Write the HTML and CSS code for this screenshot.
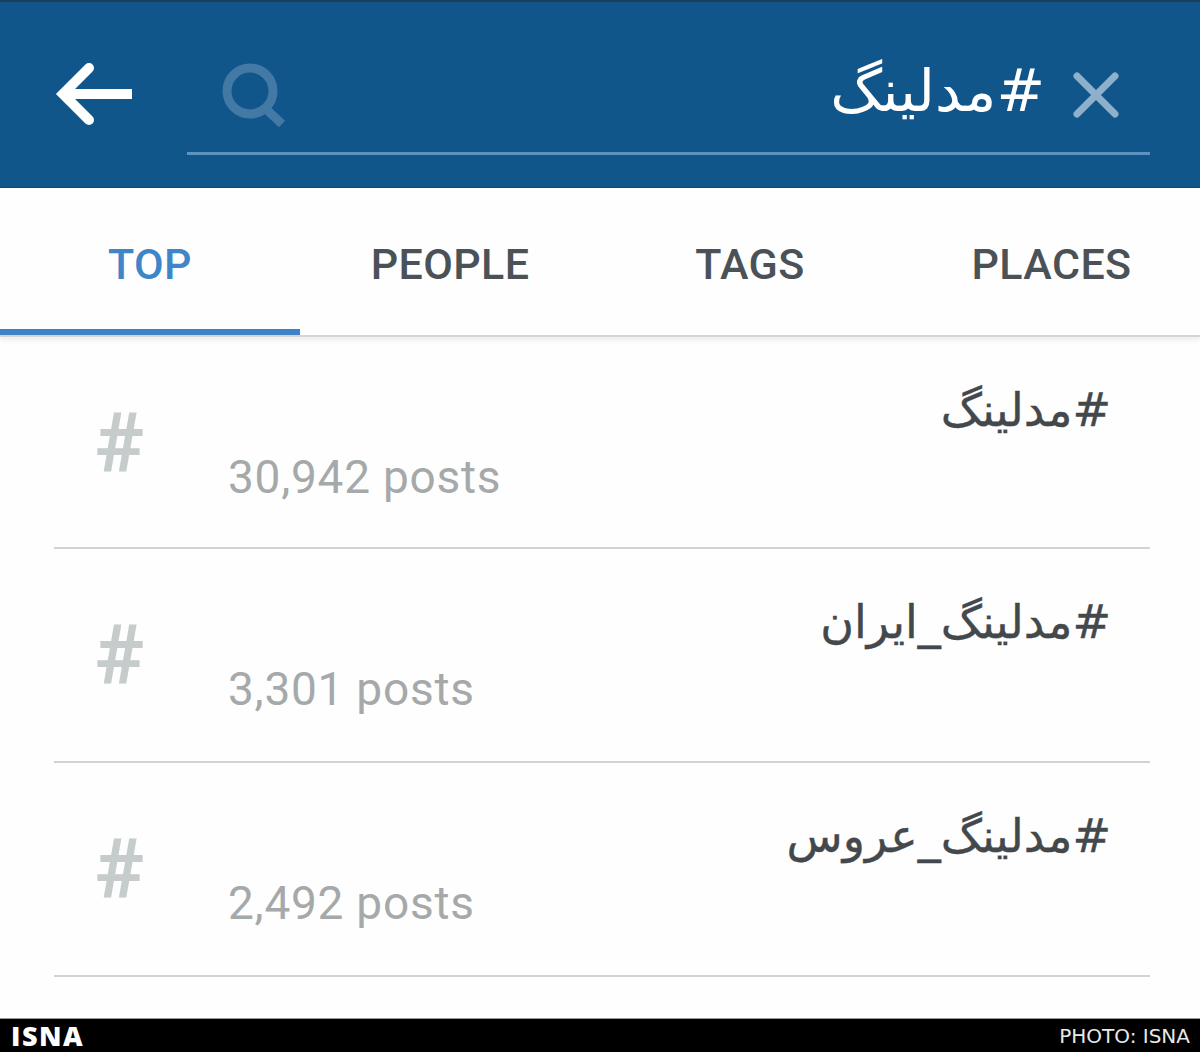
FILE: index.html
```html
<!DOCTYPE html>
<html lang="en">
<head>
    <meta charset="UTF-8">
    <meta name="viewport" content="width=device-width, initial-scale=1.0">
    <title>Search</title>
    <link rel="stylesheet" href="styles.css">
</head>
<body>
    <header class="search-bar">
        <svg class="back-icon" width="80" height="66" viewBox="0 0 80 66">
            <path d="M37 7 L11 33 L37 59" fill="none" stroke="#fff" stroke-width="10" stroke-linecap="round"/>
            <path d="M11 33 H80" fill="none" stroke="#fff" stroke-width="10"/>
        </svg>
        <div class="search-field">
            <svg class="search-icon" width="66" height="66" viewBox="0 0 66 66">
                <circle cx="28" cy="28" r="23" fill="none" stroke="#4279a5" stroke-width="9"/>
                <path d="M45 47 L60 61" fill="none" stroke="#4279a5" stroke-width="9"/>
            </svg>
            <span class="search-text" dir="rtl">#مدلینگ</span>
            <svg class="clear-icon" width="48" height="48" viewBox="0 0 48 48">
                <path d="M5 5 L43 43 M43 5 L5 43" fill="none" stroke="#8fb0cb" stroke-width="7" stroke-linecap="round"/>
            </svg>
        </div>
    </header>

    <nav class="tabs">
        <div class="tab active">TOP</div>
        <div class="tab">PEOPLE</div>
        <div class="tab">TAGS</div>
        <div class="tab last">PLACES</div>
    </nav>

    <main class="results">
        <div class="result">
            <div class="hash">#</div>
            <div class="result-body">
                <div class="tag" dir="rtl">#مدلینگ</div>
                <div class="posts">30,942 posts</div>
            </div>
        </div>
        <div class="result">
            <div class="hash">#</div>
            <div class="result-body">
                <div class="tag" dir="rtl">#مدلینگ_ایران</div>
                <div class="posts">3,301 posts</div>
            </div>
        </div>
        <div class="result">
            <div class="hash">#</div>
            <div class="result-body">
                <div class="tag" dir="rtl">#مدلینگ_عروس</div>
                <div class="posts">2,492 posts</div>
            </div>
        </div>
    </main>

    <footer class="credit">
        <span class="credit-logo">ISNA</span>
        <span class="credit-photo">PHOTO: ISNA</span>
    </footer>
</body>
</html>
```

FILE: styles.css
```css
html, body {
    margin: 0;
    padding: 0;
}
body {
    width: 1200px;
    height: 1052px;
    overflow: hidden;
    background: #fefefe;
    font-family: Roboto, "Liberation Sans", sans-serif;
    display: flex;
    flex-direction: column;
}
.search-bar {
    height: 188px;
    box-sizing: border-box;
    background: #11568a;
    border-top: 2px solid #1e3d5c;
    border-bottom: 1px solid #0e4a78;
    display: flex;
    padding: 0 50px 0 52px;
}
.back-icon {
    margin-top: 59px;
    flex: none;
}
.search-field {
    flex: 1;
    margin-left: 55px;
    height: 153px;
    box-sizing: border-box;
    border-bottom: 3px solid #5c93c0;
    display: flex;
    align-items: flex-start;
    padding: 0 30px 0 35px;
}
.search-icon {
    margin-top: 61px;
    flex: none;
}
.search-text {
    flex: 1;
    margin-top: 54px;
    padding-right: 27px;
    text-align: right;
    color: #fff;
    font-family: "DejaVu Sans", sans-serif;
    font-size: 58px;
    line-height: 70px;
}
.clear-icon {
    margin-top: 69px;
    flex: none;
}
.tabs {
    display: grid;
    grid-template-columns: repeat(4, 300px);
    height: 149px;
    box-sizing: border-box;
    border-bottom: 2px solid #d4d6d6;
    box-shadow: 0 3px 6px rgba(0,0,0,0.08);
}
.tab {
    text-align: center;
    font-size: 43px;
    font-weight: 500;
    letter-spacing: 0.4px;
    line-height: 152px;
    color: #4a5257;
    height: 147px;
    box-sizing: border-box;
}
.tab.active {
    color: #3f86c9;
    border-bottom: 6px solid #3f81c6;
}
.tab.last {
    padding-left: 3px;
}
.result {
    height: 214px;
    box-sizing: border-box;
    margin: 0 50px 0 54px;
    border-bottom: 2px solid #d2d3d3;
    display: flex;
}
.result:first-child {
    height: 212px;
}
.hash {
    width: 174px;
    padding-left: 41px;
    padding-top: 62px;
    box-sizing: border-box;
    color: #c6cbcb;
    font-size: 83px;
    font-weight: 700;
    line-height: 90px;
    flex: none;
}
.result-body {
    flex: 1;
    padding-right: 39px;
}
.tag {
    color: #43484c;
    font-family: "DejaVu Sans", sans-serif;
    font-size: 46px;
    line-height: 60px;
    padding-top: 43px;
    -webkit-text-stroke: 0.4px #43484c;
}
.posts {
    color: #a6a9a9;
    font-size: 46px;
    letter-spacing: 0.75px;
    line-height: 54px;
    margin-top: 10px;
}
.credit {
    margin-top: auto;
    height: 34px;
    background: #000;
    border-top: 1px solid #999;
    box-sizing: border-box;
    display: flex;
    justify-content: space-between;
    align-items: center;
    padding: 0 10px 0 11px;
    color: #fff;
}
.credit-logo {
    font-family: "Open Sans", sans-serif;
    font-weight: 800;
    font-size: 27px;
    letter-spacing: 1.5px;
}
.credit-photo {
    font-family: "DejaVu Sans", sans-serif;
    font-size: 20px;
    color: #e8e8e8;
}
```
